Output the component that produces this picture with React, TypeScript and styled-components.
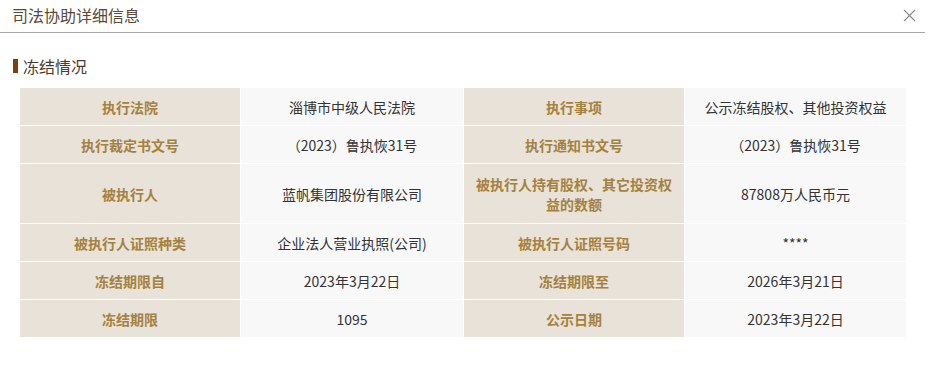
import React from "react";
import styled, { createGlobalStyle } from "styled-components";

const GlobalStyle = createGlobalStyle`
  html, body {
    margin: 0;
    padding: 0;
    background: #fff;
    font-family: "Noto Sans CJK SC", "Noto Sans", sans-serif;
  }
`;

const Page = styled.div`
  width: 934px;
  height: 370px;
  background: #fff;
`;

const Header = styled.div`
  width: 925px;
  height: 33px;
  box-sizing: border-box;
  border-bottom: 1px solid #a8a8a8;
  display: flex;
  align-items: center;
  justify-content: space-between;
  padding: 0 8px 2px 12px;
`;

const Title = styled.div`
  font-size: 16px;
  color: #5b4a38;
  line-height: 20px;
`;

const CloseButton = styled.button`
  background: none;
  border: none;
  padding: 0;
  width: 16px;
  height: 16px;
  display: flex;
  align-items: center;
  justify-content: center;
  cursor: pointer;
`;

const Section = styled.div`
  padding: 23px 0 0 13px;
`;

const SectionTitle = styled.div`
  display: flex;
  align-items: center;
  gap: 5px;
  font-size: 16px;
  line-height: 20px;
  color: #4a3a2c;
  height: 20px;
`;

const Bar = styled.span`
  width: 5px;
  height: 14px;
  background: #7b3f12;
`;

const Table = styled.table`
  margin: 11px 0 0 6px;
  width: 887px;
  border-collapse: collapse;
  table-layout: fixed;
  border: 1px solid #ededed;
`;

const Cell = styled.td<{ label?: boolean; tall?: boolean }>`
  height: ${({ tall }) => (tall ? "60px" : "38px")};
  padding: 0 10px;
  box-sizing: border-box;
  text-align: center;
  font-size: 14px;
  line-height: 20px;
  border: 1px solid #fff;
  background: ${({ label }) => (label ? "#e8e2d8" : "#f8f8f8")};
  color: ${({ label }) => (label ? "#a5813f" : "#333")};
  font-weight: ${({ label }) => (label ? 700 : 400)};
`;

const rows: [string, string, string, string][] = [
  ["执行法院", "淄博市中级人民法院", "执行事项", "公示冻结股权、其他投资权益"],
  ["执行裁定书文号", "（2023）鲁执恢31号", "执行通知书文号", "（2023）鲁执恢31号"],
  ["被执行人", "蓝帆集团股份有限公司", "被执行人持有股权、其它投资权益的数额", "87808万人民币元"],
  ["被执行人证照种类", "企业法人营业执照(公司)", "被执行人证照号码", "****"],
  ["冻结期限自", "2023年3月22日", "冻结期限至", "2026年3月21日"],
  ["冻结期限", "1095", "公示日期", "2023年3月22日"],
];

export default function App() {
  return (
    <Page>
      <GlobalStyle />
      <Header>
        <Title>司法协助详细信息</Title>
        <CloseButton aria-label="关闭">
          <svg width="13" height="13" viewBox="0 0 13 13">
            <path d="M1 1L12 12M12 1L1 12" stroke="#8a8a8a" strokeWidth="1.1" fill="none" />
          </svg>
        </CloseButton>
      </Header>
      <Section>
        <SectionTitle>
          <Bar />
          冻结情况
        </SectionTitle>
        <Table>
          <colgroup>
            <col style={{ width: "221px" }} />
            <col style={{ width: "223px" }} />
            <col style={{ width: "221px" }} />
            <col style={{ width: "222px" }} />
          </colgroup>
          <tbody>
            {rows.map((r, i) => (
              <tr key={i}>
                <Cell label tall={i === 2}>{r[0]}</Cell>
                <Cell tall={i === 2}>{r[1]}</Cell>
                <Cell label tall={i === 2}>{r[2]}</Cell>
                <Cell tall={i === 2}>{r[3]}</Cell>
              </tr>
            ))}
          </tbody>
        </Table>
      </Section>
    </Page>
  );
}
